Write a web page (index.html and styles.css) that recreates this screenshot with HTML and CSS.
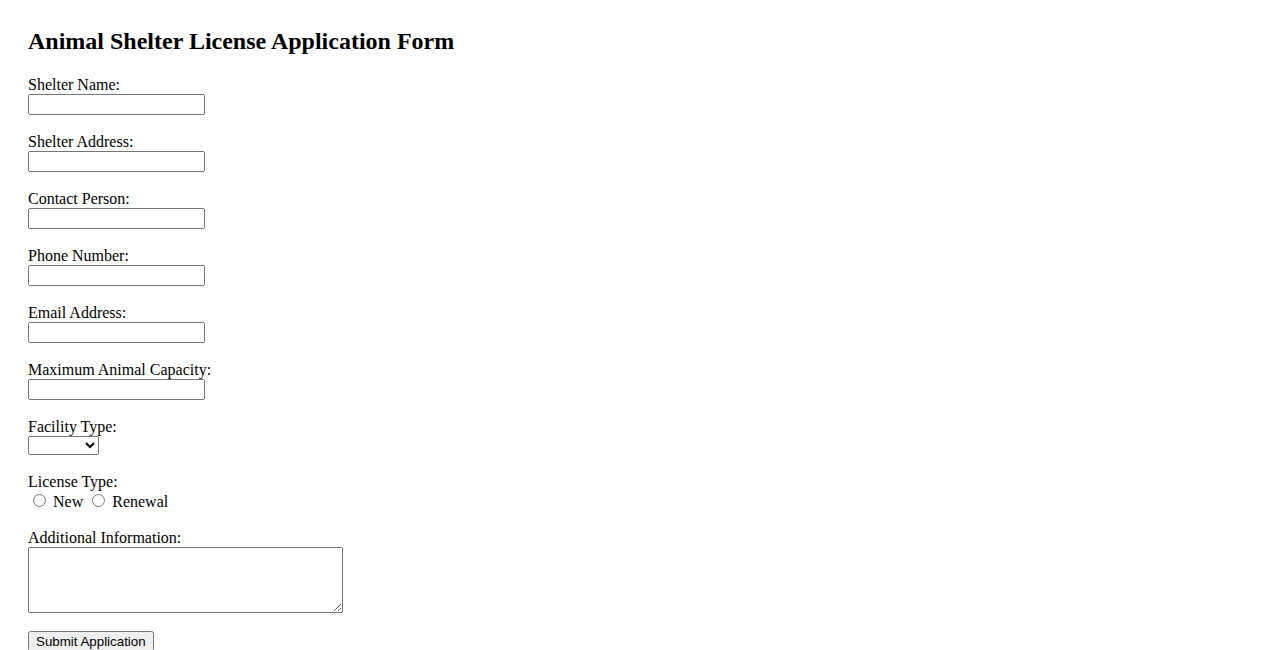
FILE: index.html
```html
<!DOCTYPE html>
<html lang="en">
<head>
<meta charset="utf-8">
<title>Animal Shelter License Application Form</title>
<link rel="stylesheet" href="styles.css">
</head>
<body>
<h2 class="title">Animal Shelter License Application Form</h2>
<form class="form">
  <div class="field">
    <label class="label" for="name">Shelter Name:</label>
    <input class="text" type="text" id="name">
  </div>
  <div class="field">
    <label class="label" for="address">Shelter Address:</label>
    <input class="text" type="text" id="address">
  </div>
  <div class="field">
    <label class="label" for="contact">Contact Person:</label>
    <input class="text" type="text" id="contact">
  </div>
  <div class="field">
    <label class="label" for="phone">Phone Number:</label>
    <input class="text" type="tel" id="phone">
  </div>
  <div class="field">
    <label class="label" for="email">Email Address:</label>
    <input class="text" type="email" id="email">
  </div>
  <div class="field">
    <label class="label" for="capacity">Maximum Animal Capacity:</label>
    <input class="text" type="number" id="capacity">
  </div>
  <div class="field">
    <label class="label" for="facility">Facility Type:</label>
    <select class="select" id="facility"><option></option></select>
  </div>
  <div class="field">
    <span class="label">License Type:</span>
    <div class="radios">
      <input type="radio" name="lt" id="new"> <label for="new">New</label> <input type="radio" name="lt" id="renewal"> <label for="renewal">Renewal</label>
    </div>
  </div>
  <div class="field field-last">
    <label class="label" for="info">Additional Information:</label>
    <textarea class="area" id="info"></textarea>
  </div>
  <button class="submit" type="submit">Submit Application</button>
</form>
</body>
</html>
```

FILE: styles.css
```css
body {
  margin: 0;
  padding: 28px;
  font-family: "Liberation Serif", "Times New Roman", serif;
  font-size: 16px;
  color: #000;
  background: #fff;
}
.title {
  margin: 0 0 20px;
  font-size: 24px;
  font-weight: bold;
}
.form {
  display: flex;
  flex-direction: column;
  align-items: flex-start;
}
.field {
  display: flex;
  flex-direction: column;
  align-items: flex-start;
  margin-bottom: 17px;
}
.field-last {
  margin-bottom: 18px;
}
.label {
  padding-top: 1px;
  line-height: 18px;
}
.text {
  width: 177px;
  height: 21px;
  box-sizing: border-box;
  margin: 0;
}
.select {
  width: 71px;
  height: 19px;
  box-sizing: border-box;
  margin: 0;
}
.radios {
  height: 20px;
  line-height: 20px;
  white-space: nowrap;
}
.area {
  width: 315px;
  height: 66px;
  box-sizing: border-box;
  margin: 0;
}
.submit {
  margin: 0;
  font-family: "Liberation Sans", Arial, sans-serif;
  font-size: 13.333px;
}
```
